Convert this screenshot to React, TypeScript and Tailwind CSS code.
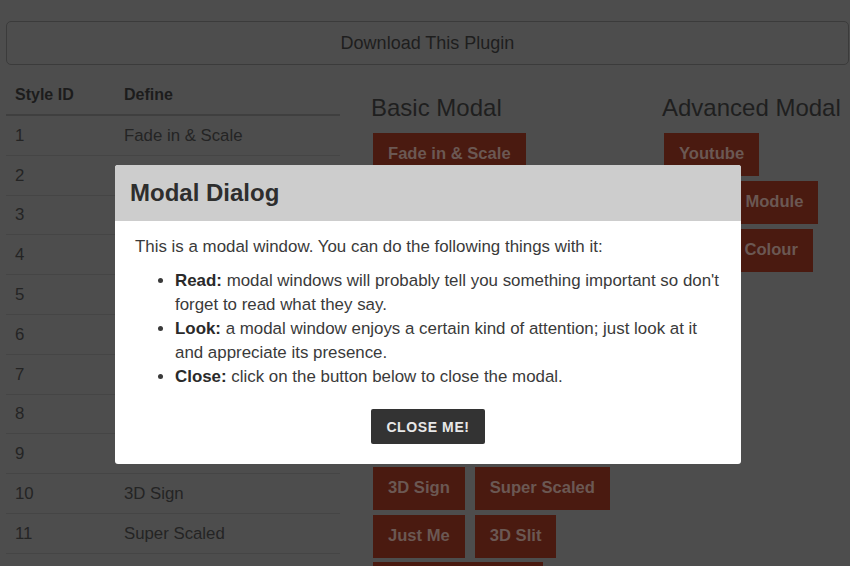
import React from "react";

const rows: [string, string][] = [
  ["1", "Fade in & Scale"],
  ["2", "Slide in (right)"],
  ["3", "Slide in (bottom)"],
  ["4", "Newspaper"],
  ["5", "Fall"],
  ["6", "Side Fall"],
  ["7", "Sticky Up"],
  ["8", "3D Flip (horizontal)"],
  ["9", "3D Flip (vertical)"],
  ["10", "3D Sign"],
  ["11", "Super Scaled"],
  ["12", "Just Me"],
];

const basicRows: string[][] = [
  ["Fade in & Scale"],
  ["Slide in (right)"],
  ["Slide in (bottom)"],
  ["Newspaper", "Fall"],
  ["Side Fall", "Sticky Up"],
  ["3D Flip (horizontal)"],
  ["3D Flip (vertical)"],
  ["3D Sign", "Super Scaled"],
  ["Just Me", "3D Slit"],
  ["3D Rotate Bottom"],
];

const advanced: string[] = ["Youtube", "Contact Module", "Change Colour"];

function Btn({ label }: { label: string }) {
  return (
    <div className="h-[43px] px-[15px] bg-[#4a1a10] text-[#6b5853] font-bold text-[16.6px] flex items-center whitespace-nowrap shrink-0">
      {label}
    </div>
  );
}

export default function App() {
  return (
    <div className="relative w-[850px] h-[566px] overflow-hidden bg-[#4d4d4d] font-['Liberation_Sans',Arial,sans-serif]">
      <div className="pt-[21px] pl-[6px] pr-[1px]">
        <div className="h-[44px] border border-[#3b3b3b] rounded-[5px] flex items-center justify-center text-[18px] text-[#1e1e1e]">
          Download This Plugin
        </div>
      </div>

      <div className="flex mt-[10px]">
        {/* table */}
        <div className="ml-[6px] w-[334px] shrink-0 text-[#242424]">
          <div className="h-[41px] flex items-center border-b-2 border-[#3f3f3f] font-bold text-[16px] text-[#1c1c1c]">
            <div className="w-[109px] pl-[9px]">Style ID</div>
            <div className="pl-[9px]">Define</div>
          </div>
          {rows.map(([id, name]) => (
            <div
              key={id}
              className="h-[39.8px] flex items-center border-b border-[#454545] text-[16.8px]"
            >
              <div className="w-[109px] pl-[9px]">{id}</div>
              <div className="pl-[9px] whitespace-nowrap">{name}</div>
            </div>
          ))}
        </div>

        {/* basic */}
        <div className="ml-[31px] w-[291px] shrink-0 pt-[19px]">
          <h2 className="text-[24px] leading-[28px] text-[#1f1f1f]">Basic Modal</h2>
          <div className="mt-[11px] pl-[2px] flex flex-col gap-[4.7px]">
            {basicRows.map((r, i) => (
              <div key={i} className="flex gap-[10px]">
                {r.map((b) => (
                  <Btn key={b} label={b} />
                ))}
              </div>
            ))}
          </div>
        </div>

        {/* advanced */}
        <div className="w-[200px] shrink-0 pt-[19px]">
          <h2 className="text-[24px] leading-[28px] text-[#1f1f1f] whitespace-nowrap">Advanced Modal</h2>
          <div className="mt-[11px] pl-[2px] flex flex-col items-start gap-[5px]">
            {advanced.map((b) => (
              <Btn key={b} label={b} />
            ))}
          </div>
        </div>
      </div>

      {/* modal */}
      <div className="absolute left-[115px] top-[165px] w-[626px] rounded-[3px] overflow-hidden bg-white">
        <div className="h-[56px] bg-[#cdcdcd] flex items-center pl-[15px]">
          <h3 className="text-[24px] font-bold text-[#2e2e2e]">Modal Dialog</h3>
        </div>
        <div className="px-[20px] pt-[14px] pb-[20px] text-[16.9px] leading-[24px] text-[#3a3a3a]">
          <p>This is a modal window. You can do the following things with it:</p>
          <ul className="list-disc pl-[40px] mt-[10px]">
            <li>
              <strong className="text-[#2a2a2a]">Read:</strong> modal windows will probably tell you something important so don't forget to read what they say.
            </li>
            <li>
              <strong className="text-[#2a2a2a]">Look:</strong> a modal window enjoys a certain kind of attention; just look at it and appreciate its presence.
            </li>
            <li>
              <strong className="text-[#2a2a2a]">Close:</strong> click on the button below to close the modal.
            </li>
          </ul>
          <div className="flex justify-center mt-[20px]">
            <button className="h-[35px] w-[114px] bg-[#333333] rounded-[2px] text-[#e8e8e8] font-bold text-[14px] tracking-[0.6px] flex items-center justify-center">
              CLOSE ME!
            </button>
          </div>
        </div>
      </div>
    </div>
  );
}
